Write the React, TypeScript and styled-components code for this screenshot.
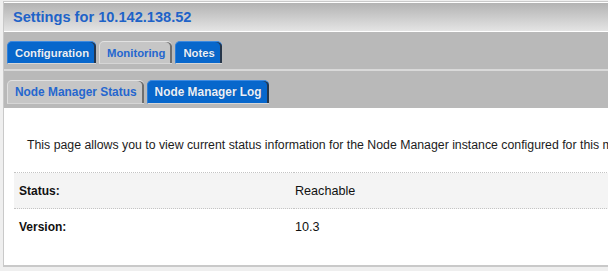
import styled, { createGlobalStyle } from "styled-components";

const GlobalStyle = createGlobalStyle`
    html, body {
        margin: 0;
        padding: 0;
        background: #efefef;
        overflow: hidden;
    }
    body {
        font-family: "Liberation Sans", Arial, sans-serif;
    }
`;

interface TabProps {
    $active?: boolean;
}

const firstTabs = [
    { label: "Configuration", active: true },
    { label: "Monitoring", active: false },
    { label: "Notes", active: true },
];

const secondTabs = [
    { label: "Node Manager Status", active: false },
    { label: "Node Manager Log", active: true },
];

const rows = [
    { label: "Status:", value: "Reachable" },
    { label: "Version:", value: "10.3" },
];

export default function App(): JSX.Element {
    return (
        <>
            <GlobalStyle />
            <Page>
                <Panel>
                    <Header>
                        <Title>Settings for 10.142.138.52</Title>
                    </Header>
                    <TabBar $tabHeight={23} $bottom={5} $fontSize={11.3}>
                        {firstTabs.map((tab) => (
                            <Tab key={tab.label} $active={tab.active}>
                                {tab.label}
                            </Tab>
                        ))}
                    </TabBar>
                    <Divider />
                    <TabBar $tabHeight={24} $bottom={4} $fontSize={11.9}>
                        {secondTabs.map((tab) => (
                            <Tab key={tab.label} $active={tab.active}>
                                {tab.label}
                            </Tab>
                        ))}
                    </TabBar>
                    <Content>
                        <Intro>
                            This page allows you to view current status information for the Node Manager instance
                            configured for this machine.
                        </Intro>
                        <Table>
                            <tbody>
                                {rows.map((row, idx) => (
                                    <Row key={row.label} $shaded={idx % 2 === 0}>
                                        <Label>{row.label}</Label>
                                        <Value>{row.value}</Value>
                                    </Row>
                                ))}
                            </tbody>
                        </Table>
                    </Content>
                </Panel>
            </Page>
        </>
    );
}

const Page = styled.div`
    padding: 1px 0 0 3px;
    width: 900px;
`;

const Panel = styled.div`
    border-top: 1px solid #c9c9c9;
    border-left: 1px solid #c9c9c9;
    border-bottom: 2px solid #c9c9c9;
    background: #ffffff;
`;

const Header = styled.div`
    height: 30px;
    box-sizing: border-box;
    border-top: 1px solid #ffffff;
    border-bottom: 1px solid #ffffff;
    background: linear-gradient(to bottom, #b3b3b3, #e4e4e4);
    display: flex;
    align-items: center;
    padding: 0 0 1px 9px;
`;

const Title = styled.h1`
    margin: 0;
    font-size: 14.6px;
    font-weight: bold;
    color: #1e63c8;
`;

const TabBar = styled.div<{ $tabHeight: number; $bottom: number; $fontSize: number }>`
    background: #b9b9b9;
    height: 37px;
    display: flex;
    align-items: flex-end;
    gap: 3px;
    padding: 0 0 ${({ $bottom }) => $bottom}px 3px;
    box-sizing: border-box;
    font-size: ${({ $fontSize }) => $fontSize}px;

    & > * {
        height: ${({ $tabHeight }) => $tabHeight}px;
    }
`;

const Divider = styled.div`
    height: 2px;
    background: #d9d9d9;
`;

const Tab = styled.div<TabProps>`
    box-sizing: border-box;
    padding: 0 7px 0 7px;
    display: flex;
    align-items: center;
    font-weight: bold;
    border-radius: 5px 5px 0 0;
    border-bottom: 1px solid #d6d6d6;
    color: ${({ $active }) => ($active ? "#e9f0fb" : "#2567cf")};
    background: ${({ $active }) => ($active ? "#0767cc" : "#c6c6c6")};
    border-top: 1px solid ${({ $active }) => ($active ? "#3d8ae0" : "#e2e2e2")};
    border-left: 1px solid ${({ $active }) => ($active ? "#2f7fd8" : "#dedede")};
    box-shadow: inset -2px 0 0 ${({ $active }) => ($active ? "#26364a" : "#6f6f6f")};
    text-shadow: ${({ $active }) => ($active ? "0 0 1px rgba(0,0,0,0.3)" : "none")};
`;

const Content = styled.div`
    padding: 30px 0 20px 10px;
`;

const Intro = styled.p`
    margin: 0 0 19px 13px;
    font-size: 12.3px;
    line-height: 15px;
    color: #1c1c1c;
    white-space: nowrap;
`;

const Table = styled.table`
    width: 100%;
    border-collapse: collapse;
    font-size: 12px;
    color: #111111;
`;

const Row = styled.tr<{ $shaded?: boolean }>`
    height: 36px;
    background: ${({ $shaded }) => ($shaded ? "#f4f4f4" : "#ffffff")};
    border-top: 1px dotted #c4c4c4;
`;

const Label = styled.td`
    width: 274px;
    padding-left: 5px;
    font-weight: bold;
`;

const Value = styled.td`
    font-size: 12.6px;
`;
